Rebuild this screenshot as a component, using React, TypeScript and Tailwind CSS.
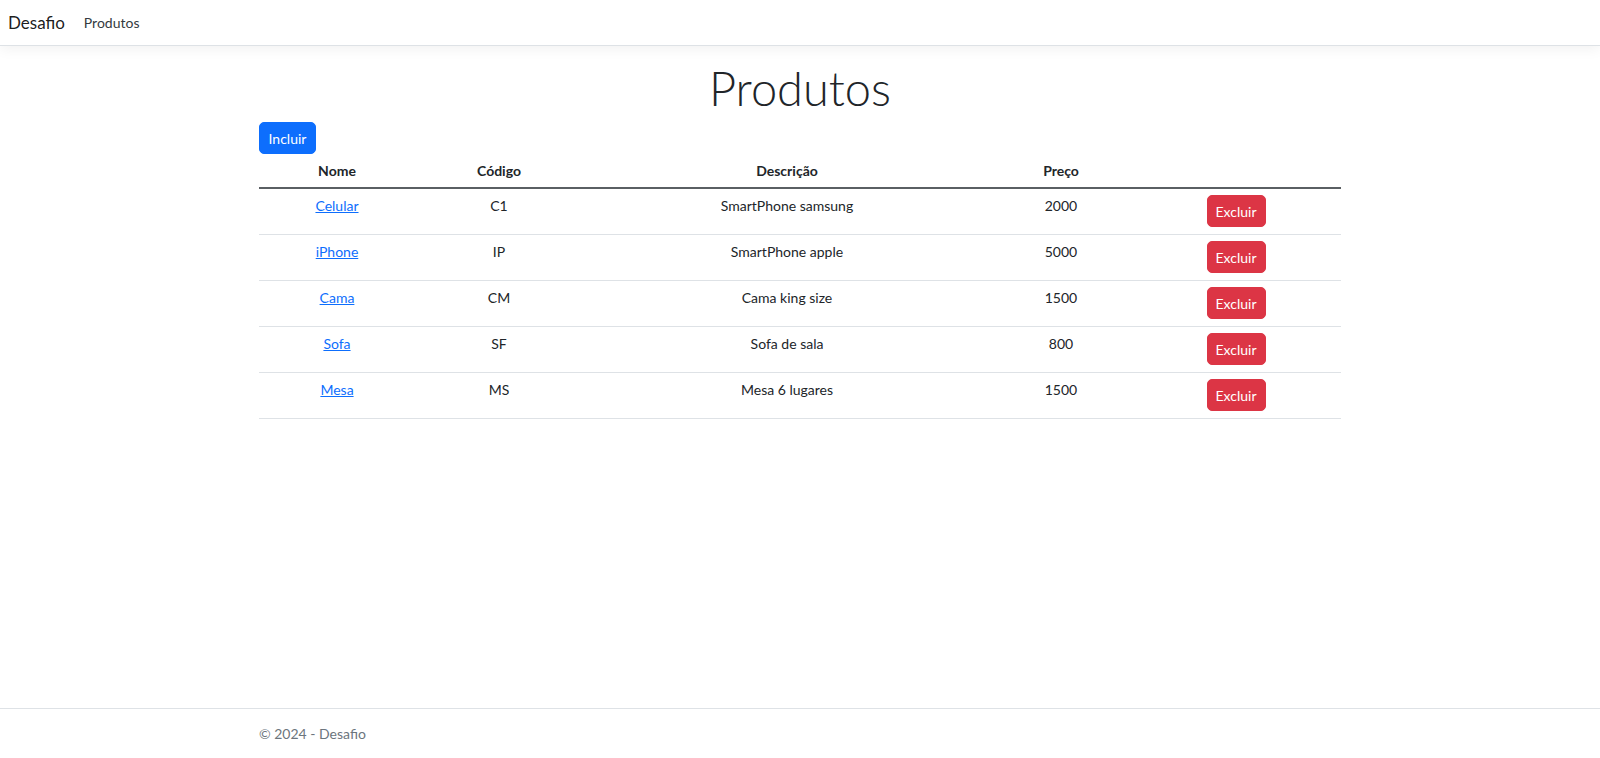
import React from "react";

const rows = [
  { nome: "Celular", codigo: "C1", descricao: "SmartPhone samsung", preco: "2000" },
  { nome: "iPhone", codigo: "IP", descricao: "SmartPhone apple", preco: "5000" },
  { nome: "Cama", codigo: "CM", descricao: "Cama king size", preco: "1500" },
  { nome: "Sofa", codigo: "SF", descricao: "Sofa de sala", preco: "800" },
  { nome: "Mesa", codigo: "MS", descricao: "Mesa 6 lugares", preco: "1500" },
];

export default function App() {
  return (
    <div
      className="min-h-screen flex flex-col bg-white text-[#212529] text-[14px] leading-[21px]"
      style={{ fontFamily: '"Segoe UI", Lato, "Open Sans", sans-serif' }}
    >
      <nav className="h-[46px] flex items-center border-b border-[#dee2e6] shadow-[0_4px_12px_rgba(0,0,0,0.05)] px-[8px]">
        <span className="text-[17px] text-[rgba(0,0,0,0.9)] mr-[19px]">Desafio</span>
        <span className="text-[14px] text-[#343a40]">Produtos</span>
      </nav>

      <main className="w-[1082px] mx-auto mt-[13px]">
        <h1 className="text-center text-[47px] font-light leading-[59px] mb-[4px] text-[#212529]">Produtos</h1>
        <button className="h-[32px] w-[57px] rounded-[5px] bg-[#0d6efd] text-white text-[14px] border border-[#0d6efd]">
          Incluir
        </button>
        <table className="w-full table-fixed border-collapse text-center">
          <colgroup>
            <col className="w-[156px]" />
            <col className="w-[168px]" />
            <col className="w-[408px]" />
            <col className="w-[140px]" />
            <col />
          </colgroup>
          <thead>
            <tr className="border-b-2 border-[#5a5f63]">
              <th className="px-[7px] py-[6px] font-bold">Nome</th>
              <th className="px-[7px] py-[6px] font-bold">Código</th>
              <th className="px-[7px] py-[6px] font-bold">Descrição</th>
              <th className="px-[7px] py-[6px] font-bold">Preço</th>
              <th className="px-[7px] py-[6px]"></th>
            </tr>
          </thead>
          <tbody>
            {rows.map((r) => (
              <tr key={r.nome} className="border-b border-[#dee2e6]">
                <td className="px-[7px] pt-[6px] pb-[7px] align-top">
                  <a href="#" className="text-[#0d6efd] underline">{r.nome}</a>
                </td>
                <td className="px-[7px] pt-[6px] align-top">{r.codigo}</td>
                <td className="px-[7px] pt-[6px] align-top">{r.descricao}</td>
                <td className="px-[7px] pt-[6px] align-top">{r.preco}</td>
                <td className="px-[7px] pt-[6px] pb-[7px] align-top">
                  <button className="h-[32px] w-[59px] rounded-[5px] bg-[#dc3545] text-white text-[14px] border border-[#dc3545]">
                    Excluir
                  </button>
                </td>
              </tr>
            ))}
          </tbody>
        </table>
      </main>

      <footer className="mt-auto h-[50px] border-t border-[#dee2e6] flex items-center">
        <div className="w-[1082px] mx-auto text-[#6c757d] text-[14px]">© 2024 - Desafio</div>
      </footer>
    </div>
  );
}
